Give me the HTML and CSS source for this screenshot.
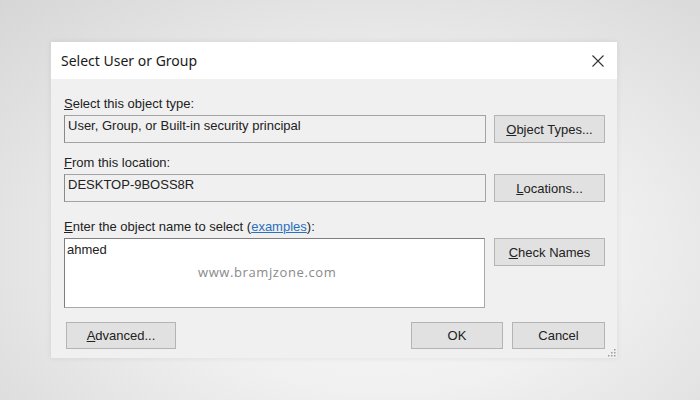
FILE: index.html
```html
<!DOCTYPE html>
<html lang="en">
<head>
  <meta charset="UTF-8" />
  <title>Select User or Group</title>
  <link rel="stylesheet" href="styles.css">
</head>
<body>
  <div class="dialog">
    <div class="titlebar">
      <span class="title">Select User or Group</span>
      <button class="close-btn" aria-label="Close">
        <svg width="12" height="12" viewBox="0 0 12 12">
          <path d="M0.5 0.5 L11.5 11.5 M11.5 0.5 L0.5 11.5" stroke="#333" stroke-width="1.1" fill="none" />
        </svg>
      </button>
    </div>

    <div class="content">
      <div class="section first">
        <label class="label"><u>S</u>elect this object type:</label>
        <div class="row">
          <div class="field">User, Group, or Built-in security principal</div>
          <button class="btn"><u>O</u>bject Types...</button>
        </div>
      </div>

      <div class="section">
        <label class="label"><u>F</u>rom this location:</label>
        <div class="row">
          <div class="field">DESKTOP-9BOSS8R</div>
          <button class="btn"><u>L</u>ocations...</button>
        </div>
      </div>

      <div class="section third">
        <label class="label"><u>E</u>nter the object name to select (<a href="#">examples</a>):</label>
        <div class="row">
          <div class="names">ahmed</div>
          <button class="btn"><u>C</u>heck Names</button>
        </div>
      </div>

      <div class="footer-row">
        <button class="btn advanced"><u>A</u>dvanced...</button>
        <button class="btn ok">OK</button>
        <button class="btn cancel">Cancel</button>
      </div>
    </div>

    <span class="watermark">www.bramjzone.com</span>
    <svg class="grip" width="9" height="8" viewBox="0 0 9 8">
      <rect x="7" y="0" width="1.5" height="1.5" fill="#9a9a9a" />
      <rect x="4" y="3" width="1.5" height="1.5" fill="#9a9a9a" />
      <rect x="7" y="3" width="1.5" height="1.5" fill="#9a9a9a" />
      <rect x="1" y="6" width="1.5" height="1.5" fill="#9a9a9a" />
      <rect x="4" y="6" width="1.5" height="1.5" fill="#9a9a9a" />
      <rect x="7" y="6" width="1.5" height="1.5" fill="#9a9a9a" />
    </svg>
  </div>
</body>
</html>
```

FILE: styles.css
```css
html, body {
  height: 100%;
}
body {
  margin: 0;
  padding: 42px 0 0 51px;
  box-sizing: border-box;
  font-family: 'Liberation Sans', Arial, sans-serif;
  font-size: 13px;
  color: #222;
  background: radial-gradient(ellipse at 55% 62%, #fbfbfb 0%, #f0f0f0 42%, #d6d6d6 100%);
}
.dialog {
  position: relative;
  width: 566px;
  height: 316px;
  background-color: #f0f0f0;
  box-shadow: 0 0 6px rgba(0, 0, 0, 0.08);
}
.titlebar {
  height: 37px;
  background-color: #ffffff;
  display: flex;
  align-items: center;
  justify-content: space-between;
  padding: 0 13px 0 10px;
}
.title {
  font-family: 'Noto Sans', 'Open Sans', sans-serif;
  font-size: 14px;
  color: #1a1a1a;
}
.close-btn {
  background: none;
  border: none;
  padding: 0;
  display: flex;
  cursor: pointer;
}
.content {
  padding: 17px 12px 0 13px;
}
.section {
  margin-top: 12px;
}
.section.first {
  margin-top: 0;
}
.section.third {
  margin-top: 17px;
}
.label {
  display: block;
  line-height: 15px;
  margin-bottom: 4px;
}
.label a {
  color: #2a6fc0;
}
.row {
  display: flex;
  align-items: flex-start;
  gap: 8px;
}
.field {
  width: 422px;
  height: 28px;
  box-sizing: border-box;
  border: 1px solid #a3a3a3;
  border-left-color: #8a8a8a;
  background-color: #f0f0f0;
  padding: 2px 3px;
  line-height: 15px;
}
.names {
  width: 421px;
  height: 70px;
  box-sizing: border-box;
  border: 1px solid #a8a8a8;
  border-top-color: #7e7e7e;
  border-left-color: #7e7e7e;
  background-color: #ffffff;
  padding: 3px 2px;
  line-height: 15px;
  margin-right: 1px;
}
.btn {
  width: 111px;
  height: 28px;
  box-sizing: border-box;
  border: 1px solid #b4b4b4;
  background-color: #e1e1e1;
  font-family: 'Liberation Sans', Arial, sans-serif;
  font-size: 13px;
  color: #222;
  padding: 0;
  cursor: pointer;
}
.footer-row {
  display: flex;
  margin-top: 14px;
}
.footer-row .btn {
  height: 27px;
}
.advanced {
  width: 110px;
  margin-left: 2px;
}
.ok {
  width: 92px;
  margin-left: auto;
}
.cancel {
  width: 93px;
  margin-left: 9px;
}
.watermark {
  position: absolute;
  left: 147px;
  top: 221px;
  font-family: 'Open Sans', sans-serif;
  font-size: 13px;
  color: #8a8a8a;
  letter-spacing: 0.6px;
}
.grip {
  position: absolute;
  right: 1px;
  bottom: 1px;
}
```
